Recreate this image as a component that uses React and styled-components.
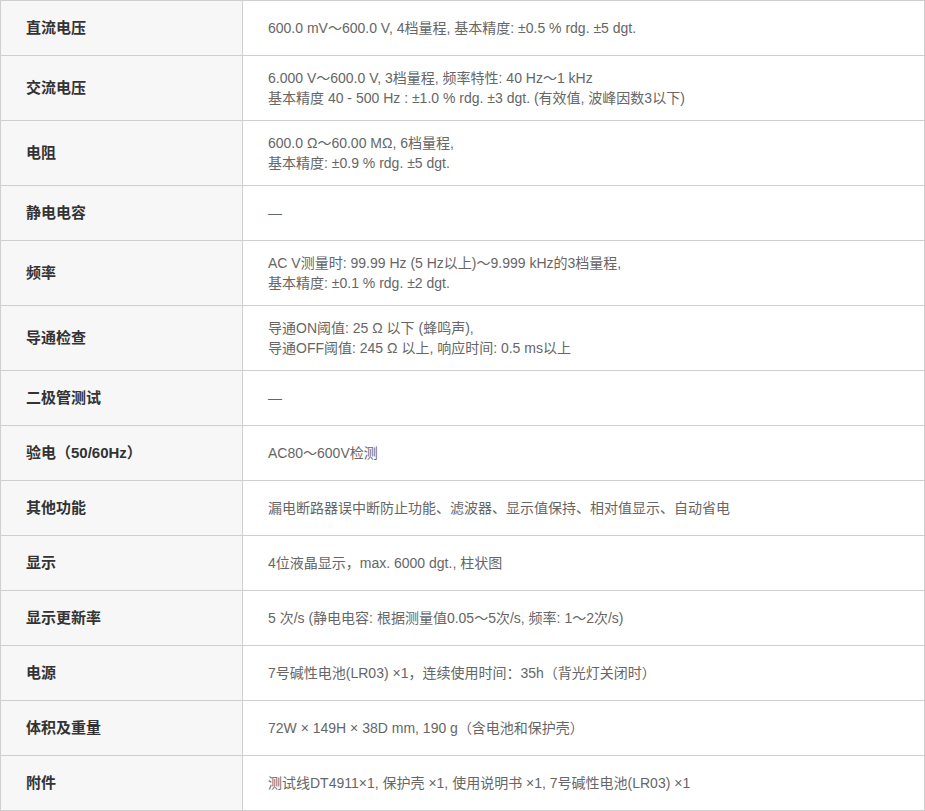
import styled, { createGlobalStyle } from "styled-components";

const GlobalStyle = createGlobalStyle`
  body {
    margin: 0;
    background: #fff;
    font-family: "Liberation Sans", Arial, "Noto Sans CJK SC", sans-serif;
  }
`;

const specs = [
    { label: "直流电压", lines: ["600.0 mV～600.0 V, 4档量程, 基本精度: ±0.5 % rdg. ±5 dgt."] },
    {
        label: "交流电压",
        lines: [
            "6.000 V～600.0 V, 3档量程, 频率特性: 40 Hz～1 kHz",
            "基本精度 40 - 500 Hz : ±1.0 % rdg. ±3 dgt. (有效值, 波峰因数3以下)",
        ],
    },
    { label: "电阻", lines: ["600.0 Ω～60.00 MΩ, 6档量程,", "基本精度: ±0.9 % rdg. ±5 dgt."] },
    { label: "静电电容", lines: ["—"] },
    {
        label: "频率",
        lines: ["AC V测量时: 99.99 Hz (5 Hz以上)～9.999 kHz的3档量程,", "基本精度: ±0.1 % rdg. ±2 dgt."],
    },
    {
        label: "导通检查",
        lines: ["导通ON阈值: 25 Ω 以下 (蜂鸣声),", "导通OFF阈值: 245 Ω 以上, 响应时间: 0.5 ms以上"],
    },
    { label: "二极管测试", lines: ["—"] },
    { label: "验电（50/60Hz）", lines: ["AC80～600V检测"] },
    { label: "其他功能", lines: ["漏电断路器误中断防止功能、滤波器、显示值保持、相对值显示、自动省电"] },
    { label: "显示", lines: ["4位液晶显示，max. 6000 dgt., 柱状图"] },
    { label: "显示更新率", lines: ["5 次/s (静电电容: 根据测量值0.05～5次/s, 频率: 1～2次/s)"] },
    { label: "电源", lines: ["7号碱性电池(LR03) ×1，连续使用时间：35h（背光灯关闭时）"] },
    { label: "体积及重量", lines: ["72W × 149H × 38D mm, 190 g（含电池和保护壳）"] },
    { label: "附件", lines: ["测试线DT4911×1, 保护壳 ×1, 使用说明书 ×1, 7号碱性电池(LR03) ×1"] },
];

export default function App() {
    return (
        <>
            <GlobalStyle />
            <SpecTable>
                <colgroup>
                    <col style={{ width: 242 }} />
                    <col />
                </colgroup>
                <tbody>
                    {specs.map((spec) => (
                        <tr key={spec.label}>
                            <Label>{spec.label}</Label>
                            <Value>
                                {spec.lines.map((line, i) => (
                                    <span key={i}>
                                        {i > 0 && <br />}
                                        {line}
                                    </span>
                                ))}
                            </Value>
                        </tr>
                    ))}
                </tbody>
            </SpecTable>
        </>
    );
}

const SpecTable = styled.table`
  width: 925px;
  border-collapse: collapse;
  table-layout: fixed;

  td, th {
    border: 1px solid #cfcfcf;
    height: 30px;
    padding: 12px 25px;
    vertical-align: middle;
    text-align: left;
  }
`;

const Label = styled.th`
  background: #f7f7f7;
  color: #333;
  font-size: 15px;
  font-weight: 700;
  line-height: 20px;
`;

const Value = styled.td`
  background: #fff;
  color: #666;
  font-size: 14px;
  line-height: 20px;
`;
